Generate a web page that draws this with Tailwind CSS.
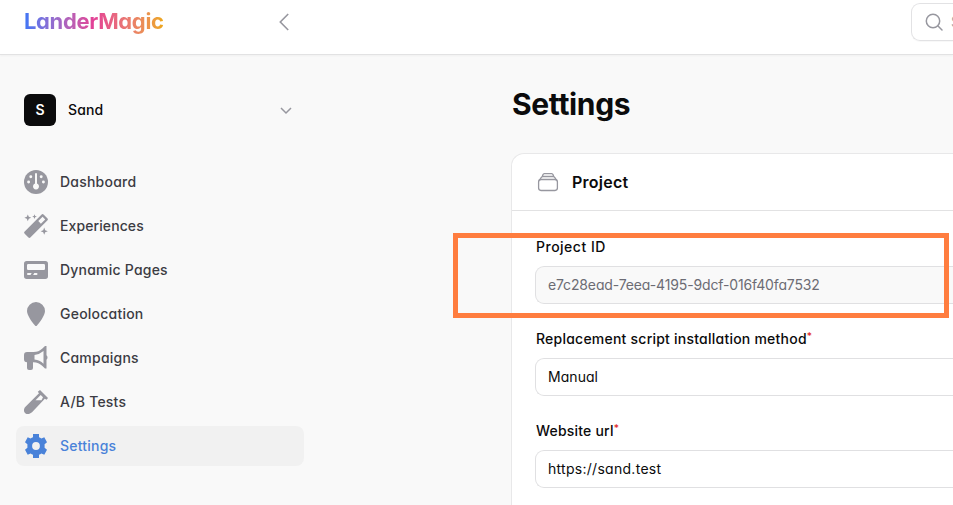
<!DOCTYPE html>
<html lang="en">
<head>
<meta charset="utf-8">
<title>Settings</title>
<script src="https://cdn.jsdelivr.net/npm/@tailwindcss/browser@4"></script>
</head>
<body class="relative h-[505px] w-[953px] overflow-hidden bg-[#f9f9f9] font-['Inter','Noto_Sans',sans-serif] [font-feature-settings:'cv11'] text-sm text-[#0b0b0c]">
  <header class="flex h-[54px] w-full items-start bg-white shadow-[0_1px_0_#e2e2e3,0_2px_2px_#0000000a]">
    <div class="flex w-[292px] shrink-0 justify-between pl-6">
      <div class="mt-[5px] h-8 whitespace-nowrap bg-linear-to-r from-[#3b76f6] via-[#e43f95] to-[#eda70c] bg-clip-text text-[22px] leading-8 font-bold tracking-[-0.35px] text-transparent">LanderMagic</div>
      <svg class="mt-2.5 h-6 w-4" viewBox="0 0 16 24" fill="none" stroke="#97979f" stroke-width="1.6"><path d="M12.2 4 4.3 12l7.9 8"/></svg>
    </div>
    <div class="mt-[3px] ml-[619px] flex h-[38px] w-[42px] shrink-0 items-center overflow-hidden rounded-l-[9px] border border-r-0 border-[#e2e2e4] pl-3 shadow-[0_1px_1px_#00000008]">
      <svg class="h-5 w-5 shrink-0" viewBox="0 0 20 20" fill="none" stroke="#97979f" stroke-width="1.5" stroke-linecap="round"><circle cx="9" cy="9" r="6.7"/><path d="m14 14 4 4"/></svg>
      <span class="ml-[7px] text-[#a1a1aa]">Search</span>
    </div>
  </header>
  <div class="flex h-[451px]">
    <aside class="w-[320px] shrink-0 px-4 pt-10">
      <div class="flex h-8 items-center pl-2">
        <div class="flex h-8 w-8 items-center justify-center rounded-[6px] bg-[#0b0b0c] font-semibold text-white">S</div>
        <span class="ml-3 font-medium tracking-[0.1px]">Sand</span>
        <svg class="ml-auto mr-2.5 h-4 w-4" viewBox="0 0 16 16" fill="none" stroke="#97979f" stroke-width="1.5"><path d="m3 6 5 5 5-5"/></svg>
      </div>
      <nav class="mt-9 flex flex-col gap-1 font-medium tracking-[0.22px] text-[#3c3c43]">
        <a class="flex h-10 items-center gap-3 rounded-lg px-2">
          <svg class="h-6 w-6" viewBox="0 0 24 24" fill="#97979f"><circle cx="12" cy="12" r="12"/><g fill="#f9f9f9"><circle cx="6.8" cy="6.8" r="1.45"/><circle cx="17.2" cy="6.8" r="1.45"/><circle cx="4.6" cy="12" r="1.45"/><circle cx="19.4" cy="12" r="1.45"/><path d="M11 3.2h2v10.4a3 3 0 1 1-2 0z"/></g></svg>
          <span>Dashboard</span></a>
        <a class="flex h-10 items-center gap-3 rounded-lg px-2">
          <svg class="h-6 w-6" viewBox="0 0 24 24" fill="#97979f"><path fill-rule="evenodd" d="M17.400.7a1.700 1.700 0 0 1 2.400 0l3.500 3.500a1.700 1.700 0 0 1 0 2.400L6.600 23.300a1.700 1.700 0 0 1-2.400 0L.7 19.800a1.700 1.700 0 0 1 0-2.400zM18.600 2.800 14.300 7.100l2.600 2.600 4.300-4.300z"/><path d="m3.800.4 1 2.400 2.400 1-2.400 1-1 2.400-1-2.400-2.400-1 2.400-1zM10.500.3l.7 1.600 1.600.7-1.600.7-.7 1.600-.7-1.600-1.600-.7 1.600-.7zM20.200 13.600l1 2.600 2.600 1-2.600 1-1 2.600-1-2.600-2.600-1 2.600-1z"/></svg>
          <span class="tracking-[0.1px]">Experiences</span></a>
        <a class="flex h-10 items-center gap-3 rounded-lg px-2">
          <svg class="h-6 w-6" viewBox="0 0 24 24" fill="#97979f"><path fill-rule="evenodd" d="M2.700 3h18.600A2.700 2.700 0 0 1 24 5.700v12.600a2.700 2.700 0 0 1-2.700 2.700H2.700A2.700 2.700 0 0 1 0 18.300V5.700A2.700 2.700 0 0 1 2.700 3zM4.200 6A1.200 1.200 0 0 0 3 7.200v3.600A1.200 1.200 0 0 0 4.200 12h15.600a1.200 1.200 0 0 0 1.200-1.200V7.200A1.200 1.200 0 0 0 19.800 6zM4 15.100a1 1 0 0 0 0 2h2.500l1.200-2zm6.300 0-1.200 2h3.400a1 1 0 0 0 0-2z"/></svg>
          <span>Dynamic Pages</span></a>
        <a class="flex h-10 items-center gap-3 rounded-lg px-2">
          <svg class="h-6 w-6" viewBox="0 0 24 24" fill="#97979f"><path d="M12 0a9 9 0 0 1 9 9c0 4.300-5.600 11.900-8 14.600a1.300 1.300 0 0 1-2 0C8.600 20.900 3 13.300 3 9a9 9 0 0 1 9-9z"/></svg>
          <span>Geolocation</span></a>
        <a class="flex h-10 items-center gap-3 rounded-lg px-2">
          <svg class="h-6 w-6" viewBox="0 0 24 24" fill="#97979f"><path fill-rule="evenodd" d="M21 0h1.500v9.300a2.900 2.900 0 0 1 0 4.400v8.800H21L18.400 20A12.500 12.500 0 0 0 9 16.200V22a2 2 0 0 1-2 2H5a2 2 0 0 1-2-2v-5.800a3 3 0 0 1-3-3V9a3 3 0 0 1 3-3h6a13 13 0 0 0 9.400-3.500zm-1.500 5.100A16 16 0 0 1 10.500 9v4.600a15 15 0 0 1 9 4.100z"/></svg>
          <span>Campaigns</span></a>
        <a class="flex h-10 items-center gap-3 rounded-lg px-2">
          <svg class="h-6 w-6" viewBox="0 0 24 24" fill="#97979f"><path fill-rule="evenodd" d="m16 0 8 8-1.500 1.800-1.700-1L8 22.300C3.500 26 .5 23.500 0 21c-.3-2 .5-3.300 1.700-4.500L15 3.200l-1.200-1.400zM16.700 5l-5.200 5.300h6L19 7.200z"/></svg>
          <span>A/B Tests</span></a>
        <a class="flex h-10 items-center gap-3 rounded-lg bg-[#f1f1f1] px-2 text-[#4982d9]">
          <svg class="h-6 w-6" viewBox="0 0 24 24" fill="#4982d9"><path fill-rule="evenodd" d="M9 0h6v3.300q1.200.5 2.400 1.300l2.900-1.300 2.700 4.900-2.400 2v3.600l2.400 2-2.700 4.900-2.900-1.300q-1.200.9-2.400 1.300V24H9v-3.300q-1.200-.4-2.400-1.300l-2.900 1.300L1 15.800l2.400-2v-3.600L1 8.200l2.700-4.900 2.900 1.300Q7.800 3.800 9 3.300zm3 8.100a3.900 3.900 0 1 0 0 7.800 3.900 3.900 0 0 0 0-7.800z"/></svg>
          <span>Settings</span></a>
      </nav>
    </aside>
    <main class="ml-[191px] flex w-[442px] shrink-0 flex-col pt-[30px]">
      <h1 class="h-10 shrink-0 pl-px text-[30px] leading-10 font-bold tracking-[-0.35px]">Settings</h1>
      <section class="mt-[29px] grow overflow-hidden rounded-tl-[13px] border-t border-l border-[#e8e8e9] bg-white">
        <div class="flex h-[57px] items-center border-b border-[#e2e2e3] pl-6">
          <svg class="h-6 w-6" viewBox="0 0 24 24" fill="none" stroke="#97979f" stroke-width="1.300"><rect x="2.600" y="9.500" width="18.800" height="11" rx="2.400"/><path d="M3.300 10.300 5.500 7.200Q6 6.500 7 6.500h10q1 0 1.500.7l2.200 3.100M6.200 6.600l.7-1.900q.4-1.100 1.500-1.100h7.200q1.100 0 1.500 1.100l.7 1.900"/></svg>
          <h2 class="ml-3 text-base font-semibold tracking-[0.25px]">Project</h2>
        </div>
        <div class="flex flex-col gap-[25px] pt-[26px] pl-[23px]">
          <div>
            <label class="block h-5 pl-px leading-5 font-medium tracking-[0.5px]">Project ID</label>
            <div class="mt-[9px] flex h-[38px] items-center rounded-l-[9px] border border-r-0 border-[#e0e0e2] bg-[#f9f9f9] pl-3 tracking-[-0.14px] text-[#6c6c74]">e7c28ead-7eea-4195-9dcf-016f40fa7532</div>
          </div>
          <div>
            <label class="flex h-5 pl-px leading-5 font-medium tracking-[0.23px]">Replacement script installation method<sup class="top-0 mt-0.5 text-[10px] leading-none text-[#e02424]">*</sup></label>
            <div class="mt-[9px] flex h-[38px] items-center rounded-l-[9px] border border-r-0 border-[#e0e0e2] pl-3 tracking-[0.05px]">Manual</div>
          </div>
          <div>
            <label class="flex h-5 pl-px leading-5 font-medium tracking-[0.2px]">Website url<sup class="top-0 mt-0.5 text-[10px] leading-none text-[#e02424]">*</sup></label>
            <div class="mt-[9px] flex h-[38px] items-center rounded-l-[9px] border border-r-0 border-[#e0e0e2] pl-3 tracking-[0.28px]">https://sand.test</div>
          </div>
        </div>
      </section>
    </main>
  </div>
  <div class="absolute top-[232.5px] left-[452.5px] h-[85px] w-[496px] border-[5px] border-[#ff7d3f]"></div>
</body>
</html>
